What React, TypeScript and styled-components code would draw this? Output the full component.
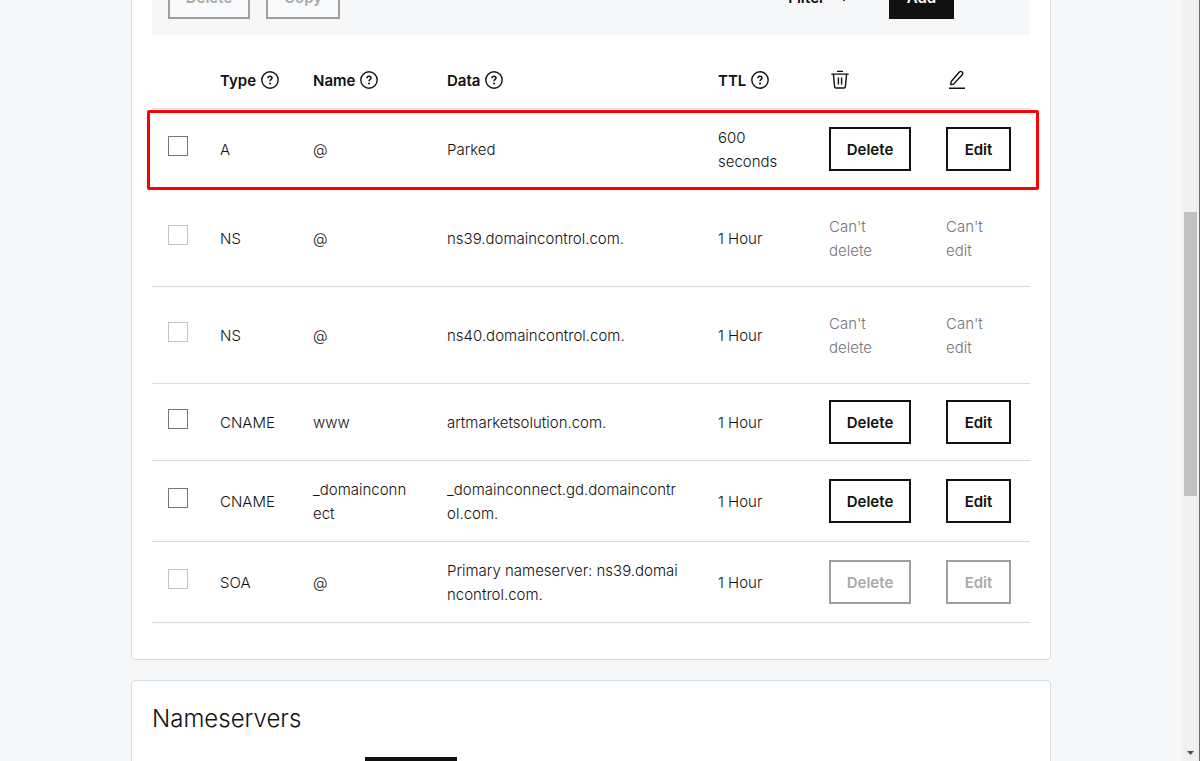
import React from 'react';
import styled, { createGlobalStyle, css } from 'styled-components';

const ink = '#111';
const line = '#d4dbe0';
const wash = '#f5f7f9';

const GlobalStyle = createGlobalStyle`
  *, *::before, *::after { box-sizing: border-box; }
  body {
    margin: 0;
    background: ${wash};
    color: ${ink};
    font: 350 15px/24px Inter, "Liberation Sans", sans-serif;
  }
`;

const Screen = styled.div`
  display: flex;
  height: 100vh;
  overflow: hidden;
`;

const Viewport = styled.main`
  flex: 1;
  min-width: 0;
  overflow: hidden;
  padding: 0 20px;
`;

const Scrolled = styled.div`
  display: flex;
  flex-direction: column;
  gap: 20px;
  max-width: 920px;
  margin: -42px auto 0;
`;

const Card = styled.section`
  background: #fff;
  border: 1px solid ${line};
  border-radius: 4px;
  padding: 0 20px 36px;
`;

const Toolbar = styled.div`
  display: flex;
  align-items: center;
  gap: 16px;
  padding: 16px 76px 16px 16px;
  background: ${wash};
`;

const Button = styled.button<{ $solid?: boolean }>`
  height: 44px;
  padding: 2px 0 0;
  border: 2px solid ${ink};
  border-radius: 0;
  background: #fff;
  color: ${ink};
  font: 600 15px/24px Inter, "Liberation Sans", sans-serif;
  white-space: nowrap;
  ${p => p.$solid && css`
    background: ${ink};
    color: #fff;
  `}
  &:disabled {
    border-color: #9f9f9f;
    color: #aaa;
  }
  ${Toolbar} &:disabled {
    background: #f8fafc;
  }
`;

const DeleteButton = styled(Button)`
  width: 82px;
`;

const CopyButton = styled(Button)`
  width: 74px;
`;

const EditButton = styled(Button)`
  width: 65px;
`;

const FilterButton = styled(Button)`
  display: flex;
  align-items: center;
  gap: 13px;
  margin-left: auto;
  margin-right: 23px;
  border: 0;
  background: none;
`;

const Table = styled.table`
  width: 100%;
  margin-top: 16px;
  table-layout: fixed;
  border-collapse: separate;
  border-spacing: 0;
`;

const Col = styled.col<{ $w?: number }>`
  width: ${p => (p.$w ? `${p.$w}px` : 'auto')};
`;

const Head = styled.th`
  height: 58px;
  padding: 0 0 0 16px;
  border-bottom: 1px solid ${line};
  text-align: left;
  font-weight: 600;
`;

const HeadLabel = styled.span`
  display: flex;
  align-items: center;
  gap: 5px;
`;

const HeadText = styled.span`
  padding-top: 2px;
`;

const Cell = styled.td`
  padding: 16px 0 16px 16px;
  border-bottom: 1px solid ${line};
  vertical-align: middle;
  white-space: pre-line;
`;

const TextCell = styled(Cell)`
  padding-top: 17px;
  padding-bottom: 15px;
`;

const Row = styled.tr<{ $highlighted?: boolean; $locked?: boolean }>`
  ${p => p.$locked && css`
    ${Cell} { height: 97px; }
  `}
  ${p => p.$highlighted && css`
    position: relative;
    ${Cell} { border-color: transparent; }
    ${Cell}:first-child::after {
      content: '';
      position: absolute;
      inset: 1px -9px 0 -5px;
      border: 3px solid #f00;
      border-radius: 2px;
      pointer-events: none;
    }
  `}
`;

const Checkbox = styled.input`
  display: block;
  appearance: none;
  width: 20px;
  height: 20px;
  margin: 0 0 6px;
  border: 1px solid #767676;
  background: #fff;
  &:disabled { border-color: #c4c4c4; }
`;

const Muted = styled.span`
  color: #767676;
`;

const Title = styled.h2`
  margin: 0;
  padding-top: 20px;
  font-size: 24px;
  font-weight: 300;
  line-height: 36px;
`;

const Actions = styled.div`
  display: flex;
  padding: 20px 0 0 213px;
`;

const ChangeButton = styled(Button)`
  width: 92px;
`;

const ScrollBar = styled.div`
  display: grid;
  grid-template-rows: 212fr 284fr 255fr 10px;
  justify-items: center;
  width: 18px;
  padding-right: 1px;
  background: #f0f0f0;
  border-right: 1px solid #6b6b6b;
`;

const Thumb = styled.div`
  grid-row: 2;
  width: 13px;
  background: #c1c1c1;
`;

const Arrow = styled.svg`
  grid-row: 4;
`;

const HelpIcon = () => (
  <svg width="18" height="18" viewBox="0 0 18 18" fill="none" stroke={ink} strokeWidth="1.4" aria-hidden="true">
    <circle cx="9" cy="9" r="8.2" />
    <path d="M7 7.2C7 5.9 7.8 5.2 9 5.2s2 .8 2 1.8c0 1.4-2 1.5-2 3.2" strokeWidth="1.5" />
    <circle cx="9" cy="12.6" r="1" fill={ink} stroke="none" />
  </svg>
);

const TrashIcon = () => (
  <svg width="22" height="20" viewBox="0 0 22 20" fill="none" stroke={ink} strokeWidth="1.4" role="img" aria-label="Delete">
    <path d="M8 1.4h6M2.3 4.1h17.4M4.4 4.1l1.2 12.6c.1.9.6 1.3 1.4 1.3h8c.8 0 1.3-.4 1.4-1.3l1.2-12.6M9.4 7.5v7M12.6 7.5v7" />
  </svg>
);

const PencilIcon = () => (
  <svg width="22" height="20" viewBox="0 0 22 20" fill="none" stroke={ink} strokeWidth="1.4" strokeLinejoin="round" role="img" aria-label="Edit">
    <path d="M13.4 2c.8-.8 1.9-.7 2.7.1s.8 1.8.1 2.6L8.3 13.4c-.9.9-2 1.3-3.6 1.1 0-1.6.2-2.8 1.1-3.8zM3 18.2h16" />
  </svg>
);

const ChevronIcon = () => (
  <svg width="12" height="10" viewBox="0 0 12 10" fill="none" stroke={ink} strokeWidth="1.3" aria-hidden="true">
    <path d="M1 2.4l5 5 5-5" />
  </svg>
);

type Access = 'full' | 'none' | 'disabled';

interface DnsRecord {
  type: string;
  name: string;
  data: string;
  ttl: string;
  access: Access;
  highlighted?: boolean;
}

const records: DnsRecord[] = [
  { type: 'A', name: '@', data: 'Parked', ttl: '600\nseconds', access: 'full', highlighted: true },
  { type: 'NS', name: '@', data: 'ns39.domaincontrol.com.', ttl: '1 Hour', access: 'none' },
  { type: 'NS', name: '@', data: 'ns40.domaincontrol.com.', ttl: '1 Hour', access: 'none' },
  { type: 'CNAME', name: 'www', data: 'artmarketsolution.com.', ttl: '1 Hour', access: 'full' },
  { type: 'CNAME', name: '_domainconn\nect', data: '_domainconnect.gd.domaincontr\nol.com.', ttl: '1 Hour', access: 'full' },
  { type: 'SOA', name: '@', data: 'Primary nameserver: ns39.domai\nncontrol.com.', ttl: '1 Hour', access: 'disabled' },
];

const columns = ['Type', 'Name', 'Data', 'TTL'];

function RecordRow({ record }: { record: DnsRecord }) {
  const locked = record.access === 'none';
  const off = record.access !== 'full';
  return (
    <Row $highlighted={record.highlighted} $locked={locked}>
      <Cell><Checkbox type="checkbox" disabled={off} aria-label={`Select ${record.type} record`} /></Cell>
      <TextCell>{record.type}</TextCell>
      <TextCell>{record.name}</TextCell>
      <TextCell>{record.data}</TextCell>
      <TextCell>{record.ttl}</TextCell>
      {locked ? (
        <>
          <TextCell><Muted>{"Can't\ndelete"}</Muted></TextCell>
          <TextCell><Muted>{"Can't\nedit"}</Muted></TextCell>
        </>
      ) : (
        <>
          <Cell><DeleteButton disabled={off}>Delete</DeleteButton></Cell>
          <Cell><EditButton disabled={off}>Edit</EditButton></Cell>
        </>
      )}
    </Row>
  );
}

export default function App() {
  return (
    <Screen>
      <GlobalStyle />
      <Viewport>
        <Scrolled>
          <Card>
            <Toolbar>
              <DeleteButton disabled>Delete</DeleteButton>
              <CopyButton disabled>Copy</CopyButton>
              <FilterButton>Filter <ChevronIcon /></FilterButton>
              <EditButton $solid>Add</EditButton>
            </Toolbar>
            <Table>
              <colgroup>
                <Col $w={52} />
                <Col $w={93} />
                <Col $w={134} />
                <Col />
                <Col $w={111} />
                <Col $w={117} />
                <Col $w={100} />
              </colgroup>
              <thead>
                <tr>
                  <Head />
                  {columns.map(name => (
                    <Head key={name} scope="col">
                      <HeadLabel><HeadText>{name}</HeadText><HelpIcon /></HeadLabel>
                    </Head>
                  ))}
                  <Head scope="col"><HeadLabel><TrashIcon /></HeadLabel></Head>
                  <Head scope="col"><HeadLabel><PencilIcon /></HeadLabel></Head>
                </tr>
              </thead>
              <tbody>
                {records.map((record, i) => <RecordRow key={i} record={record} />)}
              </tbody>
            </Table>
          </Card>
          <Card>
            <Title>Nameservers</Title>
            <Actions>
              <ChangeButton $solid>Change</ChangeButton>
            </Actions>
          </Card>
        </Scrolled>
      </Viewport>
      <ScrollBar aria-hidden="true">
        <Thumb />
        <Arrow width="7" height="4" viewBox="0 0 7 4"><path d="M0 0h7L3.5 4z" fill="#505050" /></Arrow>
      </ScrollBar>
    </Screen>
  );
}
